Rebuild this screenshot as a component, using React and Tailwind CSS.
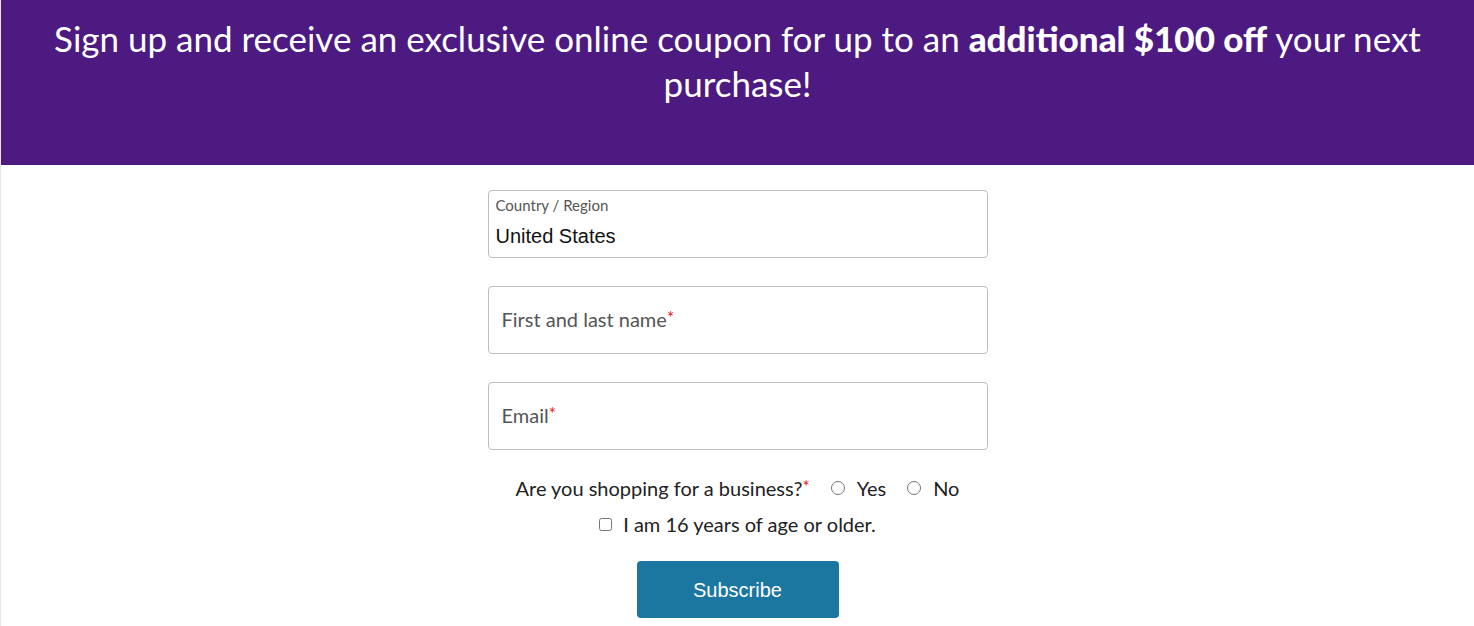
import React, { useState } from 'react';

const Star = () => (
  <span className="text-[#e0191b] text-[17px] leading-none align-top relative top-[2px]">*</span>
);

const Field = ({ label, required }) => (
  <div className="h-[68px] w-full rounded-[4px] border border-[#bdbdbd] bg-white px-[13px] pb-[3px] flex items-center">
    <span className="text-[20px] leading-[24px] text-[#555555]">
      {label}
      {required && <Star />}
    </span>
  </div>
);

const App = () => {
  const [business, setBusiness] = useState(null);
  const [adult, setAdult] = useState(false);

  return (
    <div className="min-h-[626px] bg-white border-l border-[#e6e6e6] font-['Lato','Noto_Sans',sans-serif]">
      <div className="bg-[#4c1a80] h-[165px] pt-[16px] px-4 text-center text-white text-[35px] leading-[45px]">
        Sign up and receive an exclusive online coupon for up to an <b className="font-black">additional $100 off</b> your next purchase!
      </div>

      <form className="w-[500px] mx-auto pt-[25px] flex flex-col items-center" onSubmit={(e) => e.preventDefault()}>
        <div className="h-[68px] w-full rounded-[4px] border border-[#bdbdbd] bg-white px-[7px] pt-[5px]">
          <div className="text-[15px] leading-[18px] text-[#555555]">Country / Region</div>
          <div className="mt-[10px] text-[20px] leading-[24px] text-[#111111] font-['Liberation_Sans',Arial,sans-serif]">United States</div>
        </div>

        <div className="w-full mt-[28px]">
          <Field label="First and last name" required />
        </div>
        <div className="w-full mt-[28px]">
          <Field label="Email" required />
        </div>

        <div className="mt-[26px] flex items-center text-[20px] leading-[24px] text-[#222222]">
          <span>
            Are you shopping for a business?<Star />
          </span>
          <label className="ml-[21px] flex items-center cursor-pointer">
            <input
              type="radio"
              name="business"
              checked={business === 'yes'}
              onChange={() => setBusiness('yes')}
              className="w-[14px] h-[14px] m-0 accent-[#1b76a0]"
            />
            <span className="ml-[12px]">Yes</span>
          </label>
          <label className="ml-[21px] flex items-center cursor-pointer">
            <input
              type="radio"
              name="business"
              checked={business === 'no'}
              onChange={() => setBusiness('no')}
              className="w-[14px] h-[14px] m-0 accent-[#1b76a0]"
            />
            <span className="ml-[12px]">No</span>
          </label>
        </div>

        <label className="mt-[12px] flex items-center text-[20px] leading-[24px] text-[#222222] cursor-pointer">
          <input
            type="checkbox"
            checked={adult}
            onChange={() => setAdult(!adult)}
            className="w-[13px] h-[13px] m-0 accent-[#1b76a0]"
          />
          <span className="ml-[11px]">I am 16 years of age or older.</span>
        </label>

        <button
          type="submit"
          className="mt-[25px] w-[202px] h-[57px] rounded-[4px] bg-[#1b76a0] text-white text-[20px] font-['Liberation_Sans',Arial,sans-serif] hover:bg-[#16668b]"
        >
          Subscribe
        </button>
      </form>
    </div>
  );
};

export default App;
